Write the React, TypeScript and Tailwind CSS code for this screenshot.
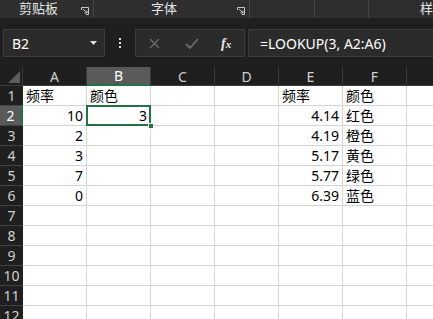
import React from "react"

const cols = ["A", "B", "C", "D", "E", "F", "G"]

type Cell = { v: string; align?: "left" | "right" }

const data: Record<number, Record<string, Cell>> = {
  1: { A: { v: "频率" }, B: { v: "颜色" }, E: { v: "频率" }, F: { v: "颜色" } },
  2: { A: { v: "10", align: "right" }, B: { v: "3", align: "right" }, E: { v: "4.14", align: "right" }, F: { v: "红色" } },
  3: { A: { v: "2", align: "right" }, E: { v: "4.19", align: "right" }, F: { v: "橙色" } },
  4: { A: { v: "3", align: "right" }, E: { v: "5.17", align: "right" }, F: { v: "黄色" } },
  5: { A: { v: "7", align: "right" }, E: { v: "5.77", align: "right" }, F: { v: "绿色" } },
  6: { A: { v: "0", align: "right" }, E: { v: "6.39", align: "right" }, F: { v: "蓝色" } },
}

const rows = Array.from({ length: 12 }, (_, i) => i + 1)

const font = { fontFamily: '"Noto Sans", "Noto Sans CJK SC", sans-serif' }

function Launcher() {
  return (
    <svg width="8" height="8" viewBox="0 0 8 8" className="text-[#c8c8c8]">
      <path d="M0.5 3V0.5H7.5V7.5H5" fill="none" stroke="currentColor" strokeWidth="1" />
      <path d="M2 2L6 6M6 3.5V6H3.5" fill="none" stroke="currentColor" strokeWidth="1" />
    </svg>
  )
}

export default function App() {
  return (
    <div className="w-[433px] h-[319px] overflow-hidden bg-[#1f1f1f] flex flex-col" style={font}>
      {/* Ribbon group labels */}
      <div className="h-[18px] bg-[#2e2e2e] flex text-[13px] text-[#e6e6e6] leading-none shrink-0">
        <div className="w-[94px] border-r border-[#454545] flex items-center pl-[19px] pr-[4px]">
          <span className="mt-[-2px]">剪贴板</span>
          <span className="ml-auto mt-[4px]"><Launcher /></span>
        </div>
        <div className="w-[156px] border-r border-[#454545] flex items-center pl-[57px] pr-[4px]">
          <span className="mt-[-2px]">字体</span>
          <span className="ml-auto mt-[4px]"><Launcher /></span>
        </div>
        <div className="w-[65px] border-r border-[#454545]" />
        <div className="w-[54px] border-r border-[#454545]" />
        <div className="flex-1 flex items-center pl-[51px]">
          <span className="mt-[-2px] whitespace-nowrap">样</span>
        </div>
      </div>

      {/* Formula bar */}
      <div className="h-[49px] flex items-start pt-[11px] shrink-0">
        <div className="ml-[3px] w-[102px] h-[28px] bg-[#2b2b2b] border border-[#3c3c3c] flex items-center pl-[8px] pr-[7px] text-[14px] text-white">
          <span>B2</span>
          <svg width="7" height="4" viewBox="0 0 7 4" className="ml-auto">
            <path d="M0 0H7L3.5 4Z" fill="#e0e0e0" />
          </svg>
        </div>
        <div className="w-[30px] h-[28px] flex flex-col items-center justify-center gap-[2px]">
          <span className="w-[2px] h-[2px] bg-[#e0e0e0]" />
          <span className="w-[2px] h-[2px] bg-[#e0e0e0]" />
          <span className="w-[2px] h-[2px] bg-[#e0e0e0]" />
        </div>
        <div className="w-[110px] h-[28px] bg-[#2b2b2b] border border-[#3c3c3c] flex items-center">
          <svg width="11" height="11" viewBox="0 0 11 11" className="ml-[13px]">
            <path d="M1 1L10 10M10 1L1 10" stroke="#6b6b6b" strokeWidth="1.4" />
          </svg>
          <svg width="14" height="11" viewBox="0 0 14 11" className="ml-[25px]">
            <path d="M1 6L5 10L13 1" fill="none" stroke="#6b6b6b" strokeWidth="1.8" />
          </svg>
          <span className="ml-[22px] text-[14px] italic font-semibold text-[#e8e8e8]" style={{ fontFamily: '"Liberation Serif", serif' }}>
            f<span className="text-[11px]">x</span>
          </span>
        </div>
        <div className="ml-[3px] flex-1 h-[28px] bg-[#2b2b2b] border border-[#3c3c3c] border-r-0 flex items-center pl-[11px] text-[14px] text-white">
          =LOOKUP(3, A2:A6)
        </div>
      </div>

      {/* Grid */}
      <div className="flex-1 overflow-hidden bg-white">
        <div
          className="grid w-[471px] bg-white"
          style={{ gridTemplateColumns: "23px repeat(7, 64px)", gridAutoRows: "20px", gridTemplateRows: "19px" }}
        >
          {/* corner */}
          <div className="bg-[#1f1f1f] border-r border-b border-[#3a3a3a] relative">
            <svg width="12" height="12" viewBox="0 0 12 12" className="absolute right-[2px] bottom-[2px]">
              <path d="M12 0V12H0Z" fill="#5c5c5c" />
            </svg>
          </div>
          {cols.map((c) => (
            <div
              key={c}
              className={`flex items-center justify-center text-[14px] border-r border-[#3a3a3a] ${
                c === "B" ? "bg-[#5a5a5a] text-white border-b-2 border-b-[#217346]" : "bg-[#1f1f1f] text-[#d0d0d0] border-b border-b-[#3a3a3a]"
              }`}
            >
              {c === "G" ? "" : c}
            </div>
          ))}

          {rows.map((r) => (
            <React.Fragment key={r}>
              <div
                className={`flex items-center justify-center text-[14px] border-b border-[#444] ${
                  r === 2 ? "bg-[#5a5a5a] text-white border-r-2 border-r-[#217346]" : "bg-[#1f1f1f] text-[#d0d0d0]"
                }`}
              >
                {r}
              </div>
              {cols.map((c) => {
                const cell = data[r]?.[c]
                const selected = r === 2 && c === "B"
                return (
                  <div
                    key={c}
                    className={`relative border-r border-b border-[#d4d4d4] flex items-end px-[3px] text-[14px] leading-[19px] text-black ${
                      cell?.align === "right" ? "justify-end" : "justify-start"
                    }`}
                  >
                    {cell?.v}
                    {selected && (
                      <>
                        <div className="absolute left-[-1px] top-[-1px] right-[-1px] bottom-[-1px] border-2 border-[#217346]" />
                        <div className="absolute right-[-4px] bottom-[-4px] w-[6px] h-[6px] bg-[#217346] border border-white z-10" />
                      </>
                    )}
                  </div>
                )
              })}
            </React.Fragment>
          ))}
        </div>
      </div>
    </div>
  )
}
